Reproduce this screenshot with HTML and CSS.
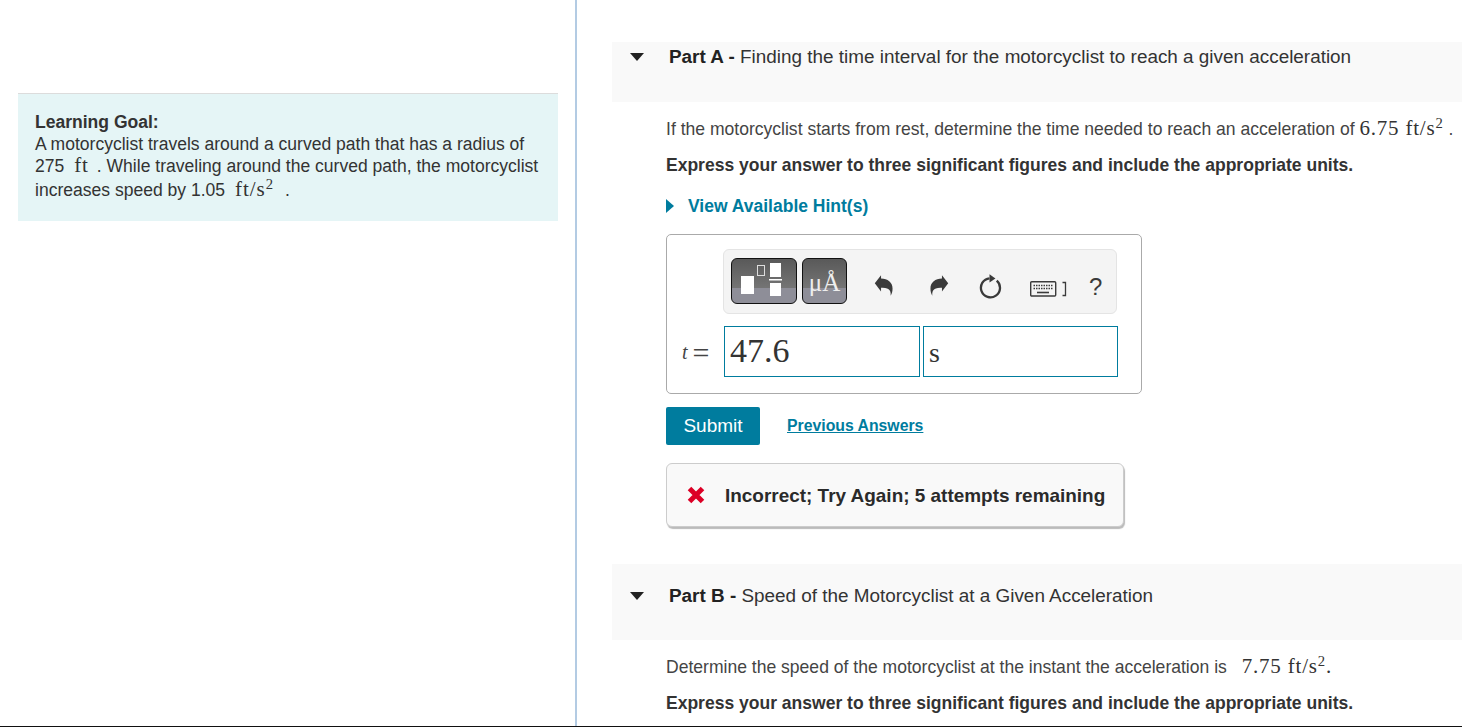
FILE: index.html
```html
<!DOCTYPE html>
<html lang="en">
<head>
<meta charset="utf-8">
<title>Motorcyclist problem</title>
<link rel="stylesheet" href="styles.css">
</head>
<body>
<div class="page">
  <aside class="left">
    <div class="goal">
      <div class="goal-line"><b>Learning Goal:</b></div>
      <div class="goal-line">A motorcyclist travels around a curved path that has a radius of</div>
      <div class="goal-line goal-third">275 <span class="math m-ft">ft</span> . While traveling around the curved path, the motorcyclist</div>
      <div class="goal-line goal-last">increases speed by 1.05 <span class="math m-ft m-last">ft/s<sup>2</sup></span> .</div>
    </div>
  </aside>
  <main class="right">
    <section class="part-head part-a">
      <svg class="caret" width="14" height="8" viewBox="0 0 14 8"><path d="M0 0h14L7 8z" fill="#222"/></svg>
      <div class="part-title"><b>Part A -</b> Finding the time interval for the motorcyclist to reach a given acceleration</div>
    </section>
    <div class="body">
      <p class="q q-a">If the motorcyclist starts from rest, determine the time needed to reach an acceleration of <span class="math big">6.75 ft/s<sup>2</sup></span> .</p>
      <p class="express">Express your answer to three significant figures and include the appropriate units.</p>
      <div class="hint">
        <svg width="8" height="14" viewBox="0 0 8 14"><path d="M0 0l8 7-8 7z" fill="#007c9e"/></svg>
        <span>View Available Hint(s)</span>
      </div>
      <div class="answer">
        <div class="toolbar">
          <div class="tb-btn tb-frac">
            <svg width="64" height="44" viewBox="0 0 64 44">
              <rect x="9" y="17" width="13" height="18" fill="#fff"/>
              <rect x="25.500" y="6.500" width="7" height="10" fill="none" stroke="#ddd" stroke-width="1"/>
              <rect x="38" y="4" width="11" height="14" fill="#fff"/>
              <rect x="37" y="20" width="13" height="1.500" fill="#fff"/>
              <rect x="38" y="24" width="11" height="13" fill="#fff"/>
            </svg>
          </div>
          <div class="tb-btn tb-unit"><span>μÅ</span></div>
          <svg class="ic ic-undo" width="20" height="23" viewBox="44 44 60 70"><path d="M46 72L65 48V58C85 58 100 70 100 88C100 98 98 104 94 110C96 98 92 84 65 86V97Z" fill="#3a3a3a"/></svg>
          <svg class="ic ic-redo" width="20" height="23" viewBox="207 44 60 70"><path d="M265 72L246 48V58C226 58 211 70 211 88C211 98 213 104 217 110C215 98 219 84 246 86V97Z" fill="#3a3a3a"/></svg>
          <svg class="ic ic-reset" width="23" height="27" viewBox="358 40 70 80"><path d="M390 55A29 29 0 1 0 412 62" fill="none" stroke="#3a3a3a" stroke-width="7"/><path d="M390 43L408 56L390 68Z" fill="#3a3a3a"/></svg>
          <svg class="ic ic-keys" width="37" height="16" viewBox="0 0 37 16">
            <rect x=".7" y=".7" width="25" height="14.300" rx="1" fill="#f4f4f4" stroke="#3a3a3a" stroke-width="1.400"/>
            <path d="M3.500 4.500h19M3.500 7.500h19" stroke="#3a3a3a" stroke-width="1.600" stroke-dasharray="1.500 1"/>
            <path d="M7 11.500h12" stroke="#3a3a3a" stroke-width="1.600"/>
            <path d="M32.500 1.500h3v13h-3" fill="none" stroke="#3a3a3a" stroke-width="1.300"/>
          </svg>
          <span class="help">?</span>
        </div>
        <div class="input-row">
          <span class="var"><i>t</i><span class="eq">=</span></span>
          <div class="field val">47.6</div>
          <div class="field unit">s</div>
        </div>
      </div>
      <div class="actions">
        <button class="submit" type="button">Submit</button>
        <a class="prev" href="#">Previous Answers</a>
      </div>
      <div class="feedback">
        <svg width="18" height="18" viewBox="0 0 18 18"><path d="M2.500 2.500L15.500 15.500M15.500 2.500L2.500 15.500" fill="none" stroke="#dc0026" stroke-width="5"/></svg>
        <span class="fb-text">Incorrect; Try Again; 5 attempts remaining</span>
      </div>
    </div>
    <section class="part-head part-b">
      <svg class="caret" width="14" height="8" viewBox="0 0 14 8"><path d="M0 0h14L7 8z" fill="#222"/></svg>
      <div class="part-title"><b>Part B -</b> Speed of the Motorcyclist at a Given Acceleration</div>
    </section>
    <div class="body">
      <p class="q q-b">Determine the speed of the motorcyclist at the instant the acceleration is <span class="math big gap">7.75 ft/s<sup>2</sup>.</span></p>
      <p class="express">Express your answer to three significant figures and include the appropriate units.</p>
    </div>
  </main>
</div>
</body>
</html>
```
FILE: styles.css
```css
* { box-sizing: border-box; }
html, body { margin: 0; height: 100%; overflow: hidden; background: #fff; }
body { font-family: "Liberation Sans", Arial, sans-serif; color: #333; }
.page {
  display: grid;
  grid-template-columns: 577px 1fr;
  height: 727px;
  border-bottom: 1px solid #111;
}
.left { border-right: 2px solid #b3cbe3; padding: 93px 17px 0 18px; }
.goal {
  background: #e5f5f6;
  border-top: 1px solid #dcdcdc;
  height: 128px;
  padding: 17px 17px 0;
  font-size: 17.550px;
  line-height: 22px;
}
.goal-line { white-space: nowrap; height: 22px; }
.goal-third { margin-top: -1px; }
.goal-last { margin-top: 2px; }
.math { font-family: "Liberation Serif", serif; }
.m-ft { margin: 0 3px 0 5px; font-size: 21px; letter-spacing: 1px; }
.m-last { margin-right: 6px; }
sup { font-size: 70%; line-height: 0; vertical-align: 7px; }
.right { padding: 42px 0 0 35px; overflow: hidden; }
.part-head {
  background: #f9f9f9;
  display: flex;
  align-items: flex-start;
  font-size: 18.900px;
  padding-left: 18px;
}
.part-a { height: 60px; }
.part-b { height: 76px; margin-top: 37px; padding-top: 17px; }
.caret { margin-top: 11px; flex: none; }
.part-title { margin-left: 25px; margin-top: 4px; line-height: 22px; color: #333; white-space: nowrap; }
.part-title b { color: #222; }
.body { padding-left: 54px; }
p { margin: 0; white-space: nowrap; font-size: 17.560px; }
.q { line-height: 22px; color: #444; }
.q-a { padding-top: 15px; }
.q-b { padding-top: 15px; }
.big { font-size: 21px; color: #333; letter-spacing: .8px; }
.gap { margin-left: 10px; }
.express { font-weight: bold; font-size: 17.530px; margin-top: 14px; line-height: 22px; color: #333; }
.hint { display: flex; align-items: center; gap: 14px; margin-top: 19px; height: 22px; color: #007c9e; font-weight: bold; font-size: 17.500px; }
.answer {
  width: 476px;
  height: 160px;
  margin-top: 17px;
  border: 1px solid #aaa;
  border-radius: 5px;
  padding: 14px 0 0 56px;
}
.toolbar {
  width: 394px;
  height: 65px;
  background: #f4f4f4;
  border: 1px solid #e4e4e4;
  border-radius: 6px;
  display: flex;
  align-items: center;
  padding-left: 7px;
}
.tb-btn {
  height: 46px;
  margin-top: -2px;
  border: 1px solid #111;
  border-radius: 6px;
  background: linear-gradient(#595959, #757575 67%, #8e8e98 67%, #8e8e98);
  display: flex;
  align-items: center;
  justify-content: center;
}
.tb-frac { width: 66px; }
.tb-unit { width: 45px; margin-left: 5px; color: #eee; font-family: "Liberation Serif", serif; font-size: 25px; }
.tb-unit span { margin-top: 5px; }
.ic { flex: none; }
.ic-undo { margin-left: 27px; margin-top: 8px; }
.ic-redo { margin-left: 35px; margin-top: 8px; }
.ic-reset { margin-left: 30px; margin-top: 9px; }
.ic-keys { margin-left: 28px; margin-top: 15px; }
.help { font-size: 24px; color: #3a3a3a; margin-left: 22px; margin-top: 10px; }
.input-row { display: flex; align-items: stretch; margin-top: 12px; margin-left: -42px; }
.var { width: 43px; padding-left: 1px; font-family: "Liberation Serif", serif; font-size: 20px; line-height: 50px; color: #444; white-space: nowrap; display: flex; align-items: center; }
.eq { font-size: 30px; margin-left: 5px; line-height: 1; font-weight: normal; padding-top: 2px; }
.field {
  height: 51px;
  border: 1px solid #007c9e;
  font-family: "Liberation Serif", serif;
  color: #333;
}
.val { width: 196px; font-size: 34px; line-height: 47px; padding-left: 5px; }
.unit { width: 195px; margin-left: 3px; font-size: 28px; line-height: 52px; padding-left: 5px; }
.actions { display: flex; align-items: center; margin-top: 13px; }
.submit {
  width: 94px;
  height: 38px;
  background: #007c9e;
  color: #fff;
  border: 0;
  border-radius: 2px;
  font: 19px "Liberation Sans", Arial, sans-serif;
  padding: 0;
}
.prev { margin-left: 27px; color: #007c9e; font-weight: bold; font-size: 15.800px; }
.feedback {
  width: 458px;
  height: 64px;
  margin-top: 18px;
  background: #f9f9f9;
  border: 1px solid #ccc;
  border-radius: 6px;
  box-shadow: 1px 2px 1px #bbb;
  display: flex;
  align-items: center;
  padding-left: 20px;
  gap: 20px;
  font-weight: bold;
  font-size: 18.950px;
  color: #2a2a2a;
  white-space: nowrap;
}
.fb-text { padding-top: 2px; }
```
